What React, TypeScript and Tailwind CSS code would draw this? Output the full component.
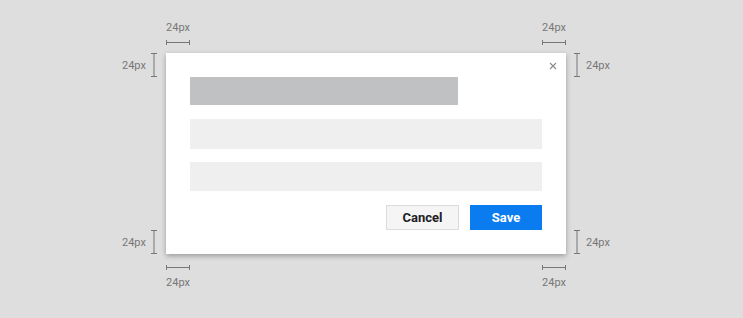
import React from 'react';

function HMark({ label, below }: { label: string; below?: boolean }) {
  const bracket = (
    <svg width="24" height="5" viewBox="0 0 24 5" className="block">
      <line x1="0.5" y1="0" x2="0.5" y2="5" stroke="#777" strokeWidth="1" />
      <line x1="23.5" y1="0" x2="23.5" y2="5" stroke="#777" strokeWidth="1" />
      <line x1="0" y1="2.5" x2="24" y2="2.5" stroke="#777" strokeWidth="1" />
    </svg>
  );
  return (
    <div className="flex w-6 flex-col items-center">
      {!below && <span className="mb-[6px] text-[11px] leading-[13px] text-[#777]">{label}</span>}
      {bracket}
      {below && <span className="mt-[6px] text-[11px] leading-[13px] text-[#777]">{label}</span>}
    </div>
  );
}

function VBracket() {
  return (
    <svg width="6" height="24" viewBox="0 0 6 24" className="block shrink-0">
      <line x1="0" y1="0.5" x2="6" y2="0.5" stroke="#777" strokeWidth="1" />
      <line x1="0" y1="23.5" x2="6" y2="23.5" stroke="#777" strokeWidth="1" />
      <line x1="3" y1="0" x2="3" y2="24" stroke="#777" strokeWidth="1" />
    </svg>
  );
}

export default function App() {
  return (
    <div
      className="h-[318px] w-[743px] bg-[#dedede] pl-[122px]"
      style={{ fontFamily: 'Roboto, "Liberation Sans", sans-serif' }}
    >
      <div className="grid grid-cols-[44px_400px_44px] grid-rows-[53px_201px_auto]">
        {/* top row */}
        <div />
        <div className="flex items-end justify-between pb-[8px]">
          <HMark label="24px" />
          <HMark label="24px" />
        </div>
        <div />

        {/* left markers */}
        <div className="flex flex-col justify-between">
          <div className="flex h-6 items-center">
            <span className="w-6 text-[11px] leading-[13px] text-[#777]">24px</span>
            <div className="ml-[5px]"><VBracket /></div>
          </div>
          <div className="flex h-6 items-center">
            <span className="w-6 text-[11px] leading-[13px] text-[#777]">24px</span>
            <div className="ml-[5px]"><VBracket /></div>
          </div>
        </div>

        {/* dialog */}
        <div className="relative bg-white p-6 shadow-[0_2px_5px_rgba(0,0,0,0.3)]">
          <button className="absolute right-[9px] top-[9px] flex h-[8px] w-[8px] items-center justify-center">
            <svg width="8" height="8" viewBox="0 0 8 8">
              <path d="M1 1L7 7M7 1L1 7" stroke="#8a8a8a" strokeWidth="1.1" />
            </svg>
          </button>
          <div className="h-[28px] w-[268px] bg-[#c0c1c3]" />
          <div className="mt-[14px] h-[30px] bg-[#efefef]" />
          <div className="mt-[13px] h-[29px] bg-[#efefef]" />
          <div className="mt-[14px] flex justify-end gap-[11px]">
            <button className="flex h-[25px] w-[73px] items-center justify-center border border-[#dcdcdc] bg-[#f5f5f5] text-[13px] font-bold text-[#1d2025]">
              Cancel
            </button>
            <button className="flex h-[25px] w-[72px] items-center justify-center bg-[#0a7cf0] text-[13px] font-bold text-white">
              Save
            </button>
          </div>
        </div>

        {/* right markers */}
        <div className="flex flex-col justify-between">
          <div className="flex h-6 items-center">
            <div className="ml-[8px]"><VBracket /></div>
            <span className="ml-[6px] text-[11px] leading-[13px] text-[#777]">24px</span>
          </div>
          <div className="flex h-6 items-center">
            <div className="ml-[8px]"><VBracket /></div>
            <span className="ml-[6px] text-[11px] leading-[13px] text-[#777]">24px</span>
          </div>
        </div>

        {/* bottom row */}
        <div />
        <div className="flex items-start justify-between pt-[11px]">
          <HMark label="24px" below />
          <HMark label="24px" below />
        </div>
        <div />
      </div>
    </div>
  );
}
